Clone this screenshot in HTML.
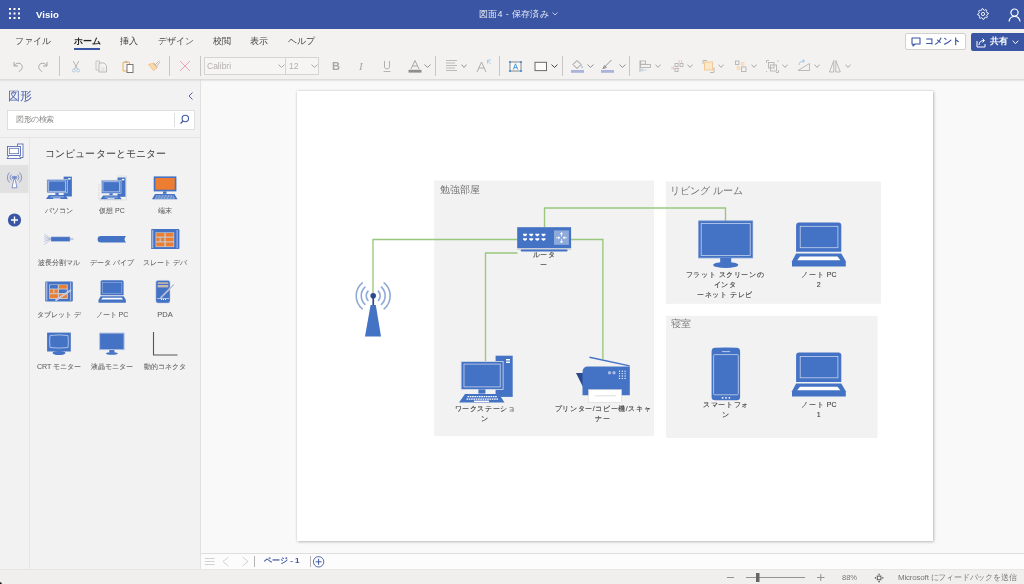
<!DOCTYPE html>
<html><head><meta charset="utf-8">
<style>
*{box-sizing:border-box;margin:0;padding:0}
html,body{-webkit-font-smoothing:antialiased;width:1024px;height:584px;overflow:hidden;background:#f3f2f1;font-family:"Liberation Sans",sans-serif;position:relative}
.a{position:absolute}
.t{position:absolute;white-space:nowrap;line-height:1;will-change:transform}
#top{left:0;top:0;width:1024px;height:29px;background:#3955a3}
#ribbon{left:0;top:29px;width:1024px;height:50px;background:#f3f2f1}
#rshadow{left:0;top:79px;width:1024px;height:3px;background:linear-gradient(#d6d6d6,rgba(240,240,240,0))}
.tab{will-change:transform;position:absolute;top:36px;font-size:9px;color:#444;line-height:10px}
.sep{position:absolute;top:56px;width:1px;height:20px;background:#c8c6c4}
.chev{position:absolute}
#left{left:0;top:79px;width:201px;height:490px;background:#f2f2f2;border-right:1px solid #e1e1e1}
#rail{left:0;top:137px;width:30px;height:432px;border-right:1px solid #e6e6e6;background:#f2f2f2}
#canvas{left:201px;top:79px;width:823px;height:474px;background:#f9f9f9}
#page{left:297px;top:91px;width:636px;height:450px;background:#fff;box-shadow:0 0 2px rgba(0,0,0,.18),1px 1px 3px rgba(0,0,0,.2)}
#pagebar{left:201px;top:553px;width:823px;height:16px;background:#fcfcfc;border-top:1px solid #dedede}
#status{left:0;top:569px;width:1024px;height:15px;background:#f0efee;border-top:1px solid #e6e6e6}
.lbl{will-change:transform;position:absolute;font-size:7px;letter-spacing:0.6px;color:#404040;-webkit-text-stroke:0.12px #404040;line-height:10px;text-align:center;white-space:nowrap}
.sl{font-size:7px;letter-spacing:0;color:#5c5c5c;-webkit-text-stroke:0.05px #5c5c5c}
.sl span{font-size:7px}
.cont{position:absolute;background:#f2f2f2}
.clbl{will-change:transform;position:absolute;font-size:10px;color:#737373;line-height:1;white-space:nowrap}
</style></head><body>
<!-- TOP BAR -->
<div id="top" class="a"></div>
<svg class="a" style="left:9px;top:8px" width="11" height="11" viewBox="0 0 11 11" fill="#fff"><rect x="0" y="0" width="2" height="2"/><rect x="4.5" y="0" width="2" height="2"/><rect x="9" y="0" width="2" height="2"/><rect x="0" y="4.5" width="2" height="2"/><rect x="4.5" y="4.5" width="2" height="2"/><rect x="9" y="4.5" width="2" height="2"/><rect x="0" y="9" width="2" height="2"/><rect x="4.5" y="9" width="2" height="2"/><rect x="9" y="9" width="2" height="2"/></svg>
<div class="t" style="left:35.5px;top:10px;font-size:9.6px;font-weight:bold;color:#fff">Visio</div>
<div class="t" style="left:478.5px;top:10px;font-size:9px;letter-spacing:0.3px;color:#e6e9f4">図面4 - 保存済み</div>
<svg class="a" style="left:552px;top:12px" width="6" height="4" viewBox="0 0 6 4"><path d="M0.5 0.5L3 3L5.5 0.5" stroke="#dfe4f1" stroke-width="0.8" fill="none"/></svg>
<svg class="a" style="left:977px;top:8px" width="12" height="12" viewBox="0 0 12 12"><path d="M11.19 4.95 L11.30 5.98 L9.93 6.77 L9.70 7.52 L10.42 8.93 L9.76 9.73 L8.23 9.32 L7.54 9.69 L7.05 11.19 L6.02 11.30 L5.23 9.93 L4.48 9.70 L3.07 10.42 L2.27 9.76 L2.68 8.23 L2.31 7.54 L0.81 7.05 L0.70 6.02 L2.07 5.23 L2.30 4.48 L1.58 3.07 L2.24 2.27 L3.77 2.68 L4.46 2.31 L4.95 0.81 L5.98 0.70 L6.77 2.07 L7.52 2.30 L8.93 1.58 L9.73 2.24 L9.32 3.77 L9.69 4.46Z" stroke="#fff" stroke-width="0.9" fill="none" stroke-linejoin="round"/><circle cx="6" cy="6" r="1.6" stroke="#fff" stroke-width="0.9" fill="none"/></svg>
<svg class="a" style="left:1008px;top:8px" width="13" height="14" viewBox="0 0 13 14"><circle cx="6.5" cy="4.6" r="3.6" stroke="#fff" stroke-width="1.2" fill="none"/><path d="M1 13.5C1.5 10 3.5 8.5 6.5 8.5S11.5 10 12 13.5" stroke="#fff" stroke-width="1.2" fill="none"/></svg>
<div id="ribbon" class="a"></div>
<div class="tab" style="left:15px">ファイル</div>
<div class="tab" style="left:74px;font-weight:bold;color:#252423">ホーム</div>
<div class="a" style="left:74px;top:48px;width:26px;height:2px;background:#3955a3"></div>
<div class="tab" style="left:120px">挿入</div>
<div class="tab" style="left:158px">デザイン</div>
<div class="tab" style="left:213px">校閲</div>
<div class="tab" style="left:250px">表示</div>
<div class="tab" style="left:288px">ヘルプ</div>
<div class="a" style="left:905px;top:33px;width:61px;height:17px;background:#fff;border:1px solid #d2d0ce;border-radius:2px"></div>
<svg class="a" style="left:911px;top:37px" width="10" height="10" viewBox="0 0 10 10"><path d="M1 1H9V7H4L2 9V7H1Z" stroke="#3955a3" stroke-width="1.1" fill="none" stroke-linejoin="round"/></svg>
<div class="t" style="left:925px;top:37px;font-size:9px;font-weight:bold;color:#3955a3">コメント</div>
<div class="a" style="left:971px;top:33px;width:56px;height:17.5px;background:#3955a3;border-radius:2px"></div>
<svg class="a" style="left:976px;top:36px" width="11" height="12" viewBox="0 0 11 12"><path d="M1 5V11H9V8" stroke="#fff" stroke-width="1" fill="none"/><path d="M3 9C3 6 5 4.5 8 4.5M6.5 2.5L8.5 4.5L6.5 6.5" stroke="#fff" stroke-width="1" fill="none"/></svg>
<div class="t" style="left:990px;top:37px;font-size:9px;font-weight:bold;color:#fff">共有</div>
<svg class="a" style="left:1012px;top:40px" width="7" height="5" viewBox="0 0 7 5"><path d="M0.7 0.7L3.5 3.7L6.3 0.7" stroke="#fff" stroke-width="1" fill="none"/></svg>
<svg class="a" style="left:12px;top:60px" width="12" height="12" viewBox="0 0 12 12" fill="none"><path d="M2 2V6H6" stroke="#a8a6a4" stroke-width="1"/><path d="M2.2 5.8C3.5 3.5 6 2.6 8.2 3.6C10.6 4.8 11 8 8.8 10L6.8 11.8" stroke="#a8a6a4" stroke-width="1"/></svg>
<svg class="a" style="left:37px;top:60px" width="12" height="12" viewBox="0 0 12 12" fill="none"><path d="M10 2V6H6" stroke="#a8a6a4" stroke-width="1"/><path d="M9.8 5.8C8.5 3.5 6 2.6 3.8 3.6C1.4 4.8 1 8 3.2 10L5.2 11.8" stroke="#a8a6a4" stroke-width="1"/></svg>
<div class="sep" style="left:59px"></div>
<svg class="a" style="left:71px;top:60px" width="10" height="13" viewBox="0 0 10 13" fill="none"><path d="M2.2 1L6.5 9M7.8 1L3.5 9" stroke="#a8a6a4" stroke-width="0.8"/><circle cx="2.8" cy="10.5" r="1.5" stroke="#a5c8e4" stroke-width="0.9"/><circle cx="7.2" cy="10.5" r="1.5" stroke="#a5c8e4" stroke-width="0.9"/></svg>
<svg class="a" style="left:95px;top:60px" width="13" height="13" viewBox="0 0 13 13" fill="none"><path d="M1 1H4.5V10H1Z" stroke="#c2c0be" stroke-width="0.9"/><path d="M4 3H9L11.5 5.5V12H4Z" stroke="#b5b3b1" stroke-width="0.9" fill="#f3f2f1"/><path d="M6 8H9.5M6 10H9.5" stroke="#cfcdcb" stroke-width="0.7"/></svg>
<svg class="a" style="left:122px;top:60px" width="13" height="13" viewBox="0 0 13 13" fill="none"><path d="M1 2.2H7.5V11H1Z" stroke="#f0a54a" stroke-width="0.9"/><path d="M3 2.5C3 1 5.5 1 5.5 2.5" stroke="#a19f9d" stroke-width="0.9"/><rect x="5" y="4.5" width="6" height="8" stroke="#797775" stroke-width="1" fill="#fff"/></svg>
<svg class="a" style="left:147px;top:59px" width="14" height="13" viewBox="0 0 14 13" fill="none"><path d="M1.5 5.5L7 4L10.5 8.5L6.5 11.5Z" fill="#fbd9ad" stroke="#f4b86e" stroke-width="0.7"/><path d="M6 4.5L10 8M8 6L12.5 1.5M9.5 7.5L13 3" stroke="#b9b7b5" stroke-width="0.9"/></svg>
<div class="sep" style="left:169px"></div>
<svg class="a" style="left:179px;top:60px" width="12" height="12" viewBox="0 0 12 12" fill="none"><path d="M1 1L11 11M11 1L1 11" stroke="#ec9aa4" stroke-width="0.9"/></svg>
<div class="sep" style="left:200px"></div>
<div class="a" style="left:204px;top:57px;width:82px;height:18px;border:1px solid #d6d4d2;background:#f6f5f4"></div>
<div class="a" style="left:285px;top:57px;width:34px;height:18px;border:1px solid #d6d4d2;background:#f6f5f4"></div>
<div class="t" style="left:207px;top:62px;font-size:8.5px;color:#b3b0ad">Calibri</div>
<div class="t" style="left:289px;top:62px;font-size:8.5px;color:#b3b0ad">12</div>
<svg class="a" style="left:278px;top:64px" width="7" height="4" viewBox="0 0 7 4" fill="none"><path d="M0.5 0.6L3.5 3.4L6.5 0.6" stroke="#a19f9d" stroke-width="0.9"/></svg>
<svg class="a" style="left:311px;top:64px" width="7" height="4" viewBox="0 0 7 4" fill="none"><path d="M0.5 0.6L3.5 3.4L6.5 0.6" stroke="#a19f9d" stroke-width="0.9"/></svg>
<div class="t" style="left:332px;top:61px;font-size:11px;font-weight:bold;color:#a8a6a4">B</div>
<div class="t" style="left:359px;top:61px;font-size:11px;font-style:italic;color:#a8a6a4;font-family:'Liberation Serif',serif">I</div>
<svg class="a" style="left:383px;top:60px" width="8" height="13" viewBox="0 0 8 13" fill="none"><path d="M1.5 1V7C1.5 9.5 6.5 9.5 6.5 7V1" stroke="#a8a6a4" stroke-width="0.9"/><path d="M0.5 11.5H7.5" stroke="#a8a6a4" stroke-width="0.8"/></svg>
<svg class="a" style="left:408px;top:59px" width="14" height="14" viewBox="0 0 14 14" fill="none"><path d="M3 10L7 1.5L11 10M4.5 7H9.5" stroke="#a19f9d" stroke-width="0.9"/><rect x="0.5" y="10.8" width="13" height="2.8" fill="#8f8e8d"/></svg>
<svg class="a" style="left:424px;top:64px" width="7" height="4" viewBox="0 0 7 4" fill="none"><path d="M0.5 0.6L3.5 3.4L6.5 0.6" stroke="#8a8886" stroke-width="0.9"/></svg>
<div class="sep" style="left:435px"></div>
<svg class="a" style="left:445px;top:60px" width="13" height="11" viewBox="0 0 13 11" fill="none"><path d="M1 0.5H12M1 3H10M1 5.5H12M1 8H10M1 10.5H12" stroke="#b5b3b1" stroke-width="0.9"/></svg>
<svg class="a" style="left:461px;top:64px" width="6" height="4" viewBox="0 0 6 4" fill="none"><path d="M0.5 0.6L3.0 3.4L5.5 0.6" stroke="#8a8886" stroke-width="0.9"/></svg>
<svg class="a" style="left:476px;top:59px" width="16" height="14" viewBox="0 0 16 14" fill="none"><path d="M1 13L5.5 3L10 13M2.8 9H8.2" stroke="#a8a6a4" stroke-width="0.9"/><path d="M11.5 1H15M11.5 1V4.5M11.5 1L14.5 5" stroke="#a3cbe9" stroke-width="0.9"/></svg>
<div class="sep" style="left:499px"></div>
<svg class="a" style="left:508px;top:59px" width="15" height="14" viewBox="0 0 15 14" fill="none"><rect x="2" y="3" width="11" height="9" fill="#fafafa" stroke="#7a7a7a" stroke-width="0.9"/><path d="M5.2 10.5L7.5 4.8L9.8 10.5M6 8.7H9" stroke="#3c8fd6" stroke-width="0.9"/><circle cx="2" cy="3" r="1.1" fill="#3c8fd6"/><circle cx="13" cy="3" r="1.1" fill="#3c8fd6"/><circle cx="2" cy="12" r="1.1" fill="#3c8fd6"/><circle cx="13" cy="12" r="1.1" fill="#3c8fd6"/></svg>
<svg class="a" style="left:534px;top:60px" width="14" height="12" viewBox="0 0 14 12" fill="none"><rect x="1" y="2.3" width="11.5" height="8.3" fill="#fbfbfb" stroke="#6a6a6a" stroke-width="1"/></svg>
<svg class="a" style="left:551px;top:64px" width="7" height="4" viewBox="0 0 7 4" fill="none"><path d="M0.5 0.6L3.5 3.4L6.5 0.6" stroke="#323130" stroke-width="0.9"/></svg>
<div class="sep" style="left:562px"></div>
<svg class="a" style="left:570px;top:58px" width="15" height="15" viewBox="0 0 15 15" fill="none"><path d="M3 6.5L7 2.5L11 6.5L7 10.5Z" stroke="#8a8886" stroke-width="0.9"/><path d="M11.5 7.5C12.5 9 12.5 10 11.5 10" stroke="#6fa8dc" stroke-width="0.9"/><rect x="1" y="12" width="13" height="2.8" fill="#aab3dc"/></svg>
<svg class="a" style="left:587px;top:64px" width="7" height="4" viewBox="0 0 7 4" fill="none"><path d="M0.5 0.6L3.5 3.4L6.5 0.6" stroke="#8a8886" stroke-width="0.9"/></svg>
<svg class="a" style="left:600px;top:58px" width="15" height="15" viewBox="0 0 15 15" fill="none"><path d="M3 10.5L11.5 2M3 10.5L4.5 7.5L6.5 9.5Z" stroke="#8a8886" stroke-width="0.9"/><rect x="1" y="12" width="13" height="2.8" fill="#aab3dc"/></svg>
<svg class="a" style="left:619px;top:64px" width="7" height="4" viewBox="0 0 7 4" fill="none"><path d="M0.5 0.6L3.5 3.4L6.5 0.6" stroke="#8a8886" stroke-width="0.9"/></svg>
<div class="sep" style="left:629px"></div>
<svg class="a" style="left:638px;top:59px" width="14" height="14" viewBox="0 0 14 14" fill="none"><path d="M2 1.5V13" stroke="#b5b3b1" stroke-width="1"/><rect x="2.5" y="2" width="5" height="3.2" stroke="#b5b3b1" stroke-width="0.9"/><rect x="2.5" y="5.5" width="10" height="3" stroke="#b5b3b1" stroke-width="0.9"/><path d="M3 11H8.5M3 11L4.8 9.6M3 11L4.8 12.4" stroke="#a9cdea" stroke-width="0.8"/></svg>
<svg class="a" style="left:655px;top:64px" width="6" height="4" viewBox="0 0 6 4" fill="none"><path d="M0.5 0.6L3.0 3.4L5.5 0.6" stroke="#a19f9d" stroke-width="0.9"/></svg>
<svg class="a" style="left:670px;top:59px" width="15" height="14" viewBox="0 0 15 14" fill="none"><rect x="5" y="4.5" width="3" height="3" stroke="#b5b3b1" stroke-width="0.9"/><rect x="10" y="4.5" width="3" height="3" stroke="#b5b3b1" stroke-width="0.9"/><rect x="5" y="9.5" width="3" height="3" stroke="#b5b3b1" stroke-width="0.9"/><path d="M9 1V4M11.5 1V4M2 7.5V10.5M3.5 7.5V10.5" stroke="#f2a9b2" stroke-width="0.7"/><path d="M8.2 8.5L9.5 10" stroke="#f2a9b2" stroke-width="0.6"/></svg>
<svg class="a" style="left:687px;top:64px" width="6" height="4" viewBox="0 0 6 4" fill="none"><path d="M0.5 0.6L3.0 3.4L5.5 0.6" stroke="#a19f9d" stroke-width="0.9"/></svg>
<svg class="a" style="left:701px;top:59px" width="15" height="15" viewBox="0 0 15 15" fill="none"><path d="M2 5V1.5H6" stroke="#b5b3b1" stroke-width="0.9"/><rect x="3.5" y="3" width="8" height="8" fill="#fae8cc" stroke="#f2c994" stroke-width="1"/><path d="M9 13.5H13V8.5" stroke="#b5b3b1" stroke-width="0.9"/></svg>
<svg class="a" style="left:718px;top:64px" width="6" height="4" viewBox="0 0 6 4" fill="none"><path d="M0.5 0.6L3.0 3.4L5.5 0.6" stroke="#a19f9d" stroke-width="0.9"/></svg>
<svg class="a" style="left:734px;top:60px" width="14" height="14" viewBox="0 0 14 14" fill="none"><rect x="1.5" y="1" width="3.5" height="3.5" stroke="#b5b3b1" stroke-width="0.9"/><rect x="7.5" y="7" width="4.5" height="4.5" stroke="#b5b3b1" stroke-width="0.9"/><rect x="7" y="2" width="3.5" height="4" fill="#f9dfc0"/><rect x="2.5" y="6" width="3.5" height="4" fill="#f9dfc0"/></svg>
<svg class="a" style="left:751px;top:64px" width="6" height="4" viewBox="0 0 6 4" fill="none"><path d="M0.5 0.6L3.0 3.4L5.5 0.6" stroke="#a19f9d" stroke-width="0.9"/></svg>
<svg class="a" style="left:765px;top:59px" width="15" height="15" viewBox="0 0 15 15" fill="none"><path d="M1.5 4V1.5H4M13 1.5V3M1.5 12V13M11 13.5H13.5V11" stroke="#b5b3b1" stroke-width="0.9"/><rect x="3.5" y="3.5" width="5.5" height="5.5" stroke="#b5b3b1" stroke-width="0.9"/><rect x="5.5" y="6" width="6" height="6" stroke="#b5b3b1" stroke-width="0.9"/></svg>
<svg class="a" style="left:782px;top:64px" width="6" height="4" viewBox="0 0 6 4" fill="none"><path d="M0.5 0.6L3.0 3.4L5.5 0.6" stroke="#a19f9d" stroke-width="0.9"/></svg>
<svg class="a" style="left:796px;top:58px" width="15" height="15" viewBox="0 0 15 15" fill="none"><path d="M2 12.5L13.5 5.5V12.5Z" stroke="#b5b3b1" stroke-width="0.9"/><path d="M3 7C3 4.5 5 3 8 3M6.8 1.2L8.6 3L6.8 4.8" stroke="#8fc0e6" stroke-width="0.9"/></svg>
<svg class="a" style="left:814px;top:64px" width="6" height="4" viewBox="0 0 6 4" fill="none"><path d="M0.5 0.6L3.0 3.4L5.5 0.6" stroke="#a19f9d" stroke-width="0.9"/></svg>
<svg class="a" style="left:828px;top:59px" width="14" height="14" viewBox="0 0 14 14" fill="none"><path d="M5.8 1.5V13H1.5Z" stroke="#b5b3b1" stroke-width="0.9"/><path d="M7.8 1.5V13H12.3Z" stroke="#b5b3b1" stroke-width="0.9"/></svg>
<svg class="a" style="left:845px;top:64px" width="6" height="4" viewBox="0 0 6 4" fill="none"><path d="M0.5 0.6L3.0 3.4L5.5 0.6" stroke="#a19f9d" stroke-width="0.9"/></svg>
<div id="left" class="a"></div>
<div id="rail" class="a"></div>
<div class="t" style="left:8px;top:90px;font-size:12px;color:#4a62ad">図形</div>
<div class="a" style="left:7px;top:110px;width:188px;height:20px;background:#fff;border:1px solid #e1dfdd"></div>
<div class="a" style="left:174px;top:113px;width:1px;height:14px;background:#e1dfdd"></div>
<div class="t" style="left:16px;top:116px;font-size:8px;letter-spacing:-0.4px;color:#8a8886">図形の検索</div>
<div class="a" style="left:0;top:137px;width:200px;height:1px;background:#e4e4e4"></div>
<div class="t" style="left:45px;top:148.5px;font-size:10px;letter-spacing:0.12px;color:#3b3a39">コンピューターとモニター</div>
<div class="lbl sl" style="left:29px;width:60px;top:205.5px">パソコン</div>
<div class="lbl sl" style="left:82px;width:60px;top:205.5px">仮想 <span>PC</span></div>
<div class="lbl sl" style="left:135px;width:60px;top:205.5px">端末</div>
<div class="lbl sl" style="left:29px;width:60px;top:258px">波長分割マル</div>
<div class="lbl sl" style="left:82px;width:60px;top:258px">データ パイプ</div>
<div class="lbl sl" style="left:135px;width:60px;top:258px">スレート デバ</div>
<div class="lbl sl" style="left:29px;width:60px;top:310px">タブレット デ</div>
<div class="lbl sl" style="left:82px;width:60px;top:310px">ノート <span>PC</span></div>
<div class="lbl sl" style="left:135px;width:60px;top:310px"><span style="font-size:7.5px">PDA</span></div>
<div class="lbl sl" style="left:29px;width:60px;top:361.5px"><span>CRT</span> モニター</div>
<div class="lbl sl" style="left:82px;width:60px;top:361.5px">液晶モニター</div>
<div class="lbl sl" style="left:135px;width:60px;top:361.5px">動的コネクタ</div>
<!--SIDEBAR-SVG-->
<svg class="a" style="left:0;top:0" width="1024" height="584" viewBox="0 0 1024 584"><defs>
<symbol id="pc" viewBox="0 0 54 47" overflow="visible">
<rect x="36.6" y="0" width="17.1" height="41.2" fill="#4472c4"/>
<rect x="47" y="3.3" width="4" height="1.5" fill="#fff"/><rect x="47" y="5.8" width="4" height="1.5" fill="#fff"/>
<rect x="2.1" y="5.8" width="42" height="27.9" fill="#4472c4" stroke="#d6dcea" stroke-width="0.8"/>
<rect x="5" y="8.4" width="36.2" height="22.8" fill="none" stroke="#c5d3ee" stroke-width="0.8"/>
<rect x="19.4" y="33.7" width="7" height="4.2" fill="#4472c4"/>
<path d="M6 38.2H40L45.5 46.7H0Z" fill="#4472c4"/>
<path d="M8.5 41H38M7.5 43.5H39" stroke="#fff" stroke-width="1.3" stroke-dasharray="1.6 0.7"/>
<rect x="15" y="44.9" width="15" height="1.4" fill="#fff"/>
</symbol>
<symbol id="pcs" viewBox="0 0 54 47" overflow="visible">
<rect x="36.6" y="0" width="17.1" height="41.2" fill="#4472c4"/>
<rect x="46" y="3" width="5" height="3" fill="#fff"/>
<rect x="2.1" y="5.8" width="42" height="27.9" fill="#4472c4" stroke="#d6dcea" stroke-width="1.4"/>
<rect x="5.5" y="9" width="35.2" height="21.6" fill="none" stroke="#b7c7ea" stroke-width="1.8"/>
<rect x="19.4" y="33.7" width="7" height="4.2" fill="#4472c4"/>
<path d="M6 38.2H40L45.5 46.7H0Z" fill="#4472c4"/>
<path d="M9 42H37" stroke="#b7c7ea" stroke-width="1.6"/>
<rect x="15" y="44" width="15" height="2" fill="#dfe6f5"/>
</symbol>
<symbol id="tvs" viewBox="0 0 54 47" overflow="visible">
<rect x="0" y="0" width="54" height="37" fill="#a9bce5"/><rect x="2.2" y="2.2" width="49.6" height="32.6" fill="#4472c4"/>
<rect x="21.5" y="37" width="11" height="5" fill="#4472c4"/>
<ellipse cx="27" cy="44" rx="12.5" ry="3" fill="#4472c4"/>
</symbol>
<symbol id="laptop" viewBox="0 0 54 44" overflow="visible">
<path d="M4.1 29.4V3Q4.1 0 7.1 0H46.3Q49.3 0 49.3 3V29.4Z" fill="#4472c4"/>
<rect x="8.2" y="3.9" width="37.7" height="21.4" fill="none" stroke="#c5d3ee" stroke-width="0.8"/>
<path d="M4.1 31.1H49.3L53.8 38.8V44H0V38.8Z" fill="#4472c4"/>
<path d="M8 34.2H45.5L48.3 37.8H5.2Z" fill="#fff"/>
</symbol>
<symbol id="tv" viewBox="0 0 54 47" overflow="visible">
<rect x="0" y="0" width="54" height="37" fill="#4472c4" stroke="#7393d3" stroke-width="0.8"/>
<rect x="2.5" y="2.5" width="49" height="32" fill="none" stroke="#c5d3ee" stroke-width="0.8"/>
<rect x="21.5" y="37" width="11" height="5" fill="#4472c4"/>
<ellipse cx="27" cy="44" rx="12.5" ry="3" fill="#4472c4"/>
</symbol>
</defs>
<!-- rail icons -->
<rect x="0" y="165" width="28.5" height="28" fill="#e1e1e1"/>
<g stroke="#5b6fb5" stroke-width="0.9" fill="#fff">
<rect x="17.5" y="144" width="5.5" height="13.5"/>
<rect x="7.5" y="146.5" width="13" height="9"/>
<path d="M9 155.5H19L21 158.5H7Z"/>
</g>
<rect x="9.3" y="148.3" width="9.4" height="5.4" fill="none" stroke="#5b6fb5" stroke-width="0.8"/>
<g stroke="#6b7fbf" stroke-width="0.8" fill="none">
<path d="M9.5 172.5A7 7 0 0 0 9.5 182.5M19.5 172.5A7 7 0 0 1 19.5 182.5"/>
<path d="M11.3 174.5A4.5 4.5 0 0 0 11.3 180.5M17.7 174.5A4.5 4.5 0 0 1 17.7 180.5"/>
<path d="M12.8 176A2.3 2.3 0 0 0 12.8 179M16.2 176A2.3 2.3 0 0 1 16.2 179"/>
<circle cx="14.5" cy="177.5" r="1.2" fill="#6b7fbf"/>
<path d="M13.8 179.5L12 187.8H17L15.2 179.5Z" fill="#fff"/>
</g>
<circle cx="14.5" cy="220" r="6.6" fill="#3955a3"/>
<path d="M14.5 216.5V223.5M11 220H18" stroke="#fff" stroke-width="1.4"/>
<!-- search icon & chevron -->
<path d="M192.5 92.5L189 96L192.5 99.5" stroke="#4a62ad" stroke-width="1" fill="none"/>
<circle cx="185.3" cy="118.5" r="3.2" stroke="#3f58a8" stroke-width="1.1" fill="none"/>
<path d="M183 121L180.5 123.5" stroke="#3f58a8" stroke-width="1.3"/>
<!-- row1 -->
<use href="#pcs" x="46" y="176.6" width="26" height="22.7"/>
<path d="M99 184V200H126.5V176H117" fill="none" stroke="#b0b0b0" stroke-width="0.6" stroke-dasharray="0.7 0.9"/>
<use href="#pcs" x="100" y="177.5" width="26" height="22"/>
<g>
<rect x="153.7" y="176.4" width="22.7" height="15" fill="#4472c4"/>
<rect x="155.4" y="178" width="19.4" height="11.7" fill="#ed7d31"/>
<rect x="163" y="191.4" width="3.5" height="2.4" fill="#4472c4"/>
<path d="M155 194H174.5L177.5 199.3H152Z" fill="#4472c4"/>
<path d="M156 196H173.5M155 198H175" stroke="#fff" stroke-width="0.8" stroke-dasharray="1 0.5"/>
</g>
<!-- row2 -->
<g stroke="#a8b4d4" stroke-width="0.7" fill="none">
<path d="M51 239L44.5 234M51 239L44 236.5M51 239H44M51 239L44 241.5M51 239L44.5 244.5"/>
</g>
<rect x="51" y="236.9" width="19" height="4.4" fill="#4472c4" stroke="#a8b4d4" stroke-width="0.5"/>
<path d="M70 239H73.5" stroke="#7a93cc" stroke-width="0.8"/>
<path d="M101 236H126L125 237.5Q124 239.3 125 241L126 242.6H101Q97.6 242.6 97.6 239.3Q97.6 236 101 236Z" fill="#4472c4"/>
<g>
<rect x="151" y="229.1" width="28.4" height="20" rx="1.2" fill="#4472c4"/>
<rect x="151.5" y="230" width="1.8" height="18.2" fill="#9fb4e2"/>
<rect x="176.5" y="230" width="1.2" height="18.2" fill="#9fb4e2"/>
<rect x="155.5" y="232.3" width="18.7" height="14.8" fill="#c8c4c4"/>
<g fill="#ed7d31"><rect x="156.3" y="233" width="8" height="3.6" rx="0.6"/><rect x="165.8" y="233" width="7.6" height="3.6" rx="0.6"/>
<rect x="156.3" y="237.7" width="3.3" height="3.6" rx="0.6"/><rect x="160.8" y="237.7" width="3.5" height="3.6" rx="0.6"/><rect x="165.8" y="237.7" width="7.6" height="3.6" rx="0.6"/>
<rect x="156.3" y="242.6" width="8" height="3.6" rx="0.6"/><rect x="165.8" y="242.6" width="7.6" height="3.6" rx="0.6"/></g>
</g>
<!-- row3 -->
<g>
<rect x="45.1" y="281.4" width="27.7" height="20" rx="1.2" fill="#4472c4"/>
<rect x="45.6" y="282.2" width="1.8" height="18.4" fill="#9fb4e2"/>
<rect x="70" y="282.2" width="1.2" height="18.4" fill="#9fb4e2"/>
<rect x="49.2" y="284.4" width="18.6" height="14.6" fill="#c8c4c4"/>
<g><rect x="50" y="285" width="7.8" height="3.6" rx="0.6" fill="#4472c4"/><rect x="59" y="285" width="7.8" height="3.6" rx="0.6" fill="#ed7d31"/>
<rect x="50" y="289.5" width="3.2" height="3.6" rx="0.6" fill="#ed7d31"/><rect x="54.5" y="289.5" width="3.3" height="3.6" rx="0.6" fill="#ed7d31"/><rect x="59" y="289.5" width="7.8" height="3.6" rx="0.6" fill="#4472c4"/>
<rect x="50" y="294.3" width="7.8" height="3.6" rx="0.6" fill="#ed7d31"/><rect x="59" y="294.3" width="7.8" height="3.6" rx="0.6" fill="#ed7d31"/></g>
<path d="M55.5 300.5L71 290" stroke="#dfe3ef" stroke-width="1.6"/><path d="M55.5 300.5L71 290" stroke="#8a94b0" stroke-width="0.5"/>
</g>
<use href="#laptop" x="98.5" y="280" width="27.5" height="23"/>
<g>
<rect x="155.9" y="280.4" width="14.1" height="22.6" rx="2" fill="#4472c4" stroke="#b9c7e8" stroke-width="0.5"/>
<rect x="157.6" y="282.3" width="10.7" height="1.6" fill="#c9b8ad"/>
<rect x="157.6" y="285" width="10.7" height="2.4" fill="#c9b8ad"/>
<path d="M157.2 298.5H169" stroke="#dbe3f3" stroke-width="0.7"/>
<path d="M161 299.5H162M163 299.5H164M165 299.5H166" stroke="#fff" stroke-width="1"/>
<path d="M160.5 298L173.8 284.6" stroke="#e6e9f2" stroke-width="1.5"/><path d="M160.5 298L173.8 284.6" stroke="#5b6a90" stroke-width="0.6"/>
</g>
<!-- row4 -->
<g>
<rect x="47.1" y="332.6" width="23.7" height="18.9" fill="#4472c4"/>
<path d="M50 335.5Q59 334.3 68 335.5Q68.7 341.5 68 347.5Q59 348.7 50 347.5Q49.3 341.5 50 335.5Z" fill="none" stroke="#c5d3ee" stroke-width="0.8"/>
<ellipse cx="59" cy="353" rx="6.5" ry="2" fill="#4472c4"/>
</g>
<use href="#tvs" x="99.1" y="332.6" width="25.5" height="22.2"/>
<path d="M153.5 332V355H177.5" stroke="#555" stroke-width="1.1" fill="none"/>
</svg>
<div id="canvas" class="a"></div>
<div id="page" class="a"></div>
<svg class="a" style="left:0;top:0" width="1024" height="584" viewBox="0 0 1024 584">
<rect x="434.2" y="180.5" width="219.8" height="255.7" fill="#f2f2f2"/>
<rect x="665.8" y="181.5" width="215.2" height="122.3" fill="#f2f2f2"/>
<rect x="666" y="315.8" width="211.5" height="122.2" fill="#f2f2f2"/>
<g stroke="#98c77c" stroke-width="1.35" fill="none">
<path d="M373 296V239.5H517.5"/>
<path d="M544.5 227V208H725.5V221"/>
<path d="M571 239.5H602.9V359"/>
<path d="M517.5 253H485.5V361.5"/>
</g>
<!-- antenna -->
<g stroke="#8eaad8" stroke-width="1.6" fill="none" stroke-linecap="round">
<path d="M362.27 282.78A17 17 0 0 0 362.27 308.82"/>
<path d="M384.13 282.78A17 17 0 0 1 384.13 308.82"/>
<path d="M364.92 287.16A12 12 0 0 0 364.92 304.44"/>
<path d="M381.48 287.16A12 12 0 0 1 381.48 304.44"/>
<path d="M368.02 291.11A7 7 0 0 0 368.02 300.49"/>
<path d="M378.38 291.11A7 7 0 0 1 378.38 300.49"/>
</g>
<rect x="372.4" y="296" width="1.7" height="10" fill="#2b4a8e"/>
<circle cx="373.2" cy="295.8" r="2.8" fill="#2b4a8e"/>
<path d="M370.6 305.1H375.8L381 336.5H365Z" fill="#4472c4"/>
<!-- router -->
<rect x="517.2" y="227.2" width="53.9" height="20.8" fill="#4472c4"/>
<rect x="517.2" y="248" width="53.9" height="1.8" fill="#c9ced8"/>
<rect x="520.7" y="249.6" width="46.9" height="2" rx="1" fill="#4472c4"/>
<rect x="554" y="230.4" width="14.9" height="14.4" fill="#8eaadc"/>
<g fill="#fff">
<path d="M523 233.7H527V235L525 236.5L523 235Z"/><path d="M523 238.29999999999998H527V239.6L525 241.1L523 239.6Z"/><path d="M529.2 233.7H533.2V235L531.2 236.5L529.2 235Z"/><path d="M529.2 238.29999999999998H533.2V239.6L531.2 241.1L529.2 239.6Z"/><path d="M535.3 233.7H539.3V235L537.3 236.5L535.3 235Z"/><path d="M535.3 238.29999999999998H539.3V239.6L537.3 241.1L535.3 239.6Z"/><path d="M541.5 233.7H545.5V235L543.5 236.5L541.5 235Z"/><path d="M541.5 238.29999999999998H545.5V239.6L543.5 241.1L541.5 239.6Z"/>
</g>
<g stroke="#fff" stroke-width="0.7" fill="#fff">
<path d="M561.5 233V236.5M561.5 239V242.5M556 237.7H559.5M563.5 237.7H567"/>
<path d="M560.5 234L561.5 232.5L562.5 234Z M560.5 241.5L561.5 243L562.5 241.5Z M558.5 236.8L560 237.7L558.5 238.6Z M564.5 236.8L563 237.7L564.5 238.6Z"/>
</g>
<!-- workstation -->
<use href="#pc" x="459" y="355.7" width="54" height="47"/>
<!-- printer -->
<path d="M589.5 357.2L629.6 365.9" stroke="#4472c4" stroke-width="1.4"/>
<path d="M576 373.1H583V387Z" fill="#2b4a8e"/>
<path d="M582.5 395.2V372Q582.5 366.4 588 366.4H629.8V395.2Z" fill="#4472c4"/>
<circle cx="609.5" cy="372.8" r="1.7" fill="#a8bce6"/>
<circle cx="614" cy="372.8" r="1.7" fill="#a8bce6"/>
<g fill="#e8eefa"><circle cx="619.5" cy="371.2" r="0.7"/><circle cx="619.5" cy="373.6" r="0.7"/><circle cx="619.5" cy="376" r="0.7"/><circle cx="619.5" cy="378.4" r="0.7"/><circle cx="622.3" cy="371.2" r="0.7"/><circle cx="622.3" cy="373.6" r="0.7"/><circle cx="622.3" cy="376" r="0.7"/><circle cx="622.3" cy="378.4" r="0.7"/><circle cx="625.1" cy="371.2" r="0.7"/><circle cx="625.1" cy="373.6" r="0.7"/><circle cx="625.1" cy="376" r="0.7"/><circle cx="625.1" cy="378.4" r="0.7"/></g>
<rect x="588.5" y="389.6" width="33.1" height="12.6" fill="#fff" stroke="#d0d0d0" stroke-width="0.5"/>
<path d="M594.8 395.8H616" stroke="#c8c8c8" stroke-width="0.6"/>
<!-- TV, laptops -->
<use href="#tv" x="698.7" y="220.9" width="54" height="47"/>
<use href="#laptop" x="792" y="222.4" width="54" height="44"/>
<use href="#laptop" x="792" y="352.5" width="54" height="44"/>
<!-- phone -->
<path d="M711.6 351.5Q711.6 348 715 347.8Q726 347 736.7 347.8Q740.1 348 740.1 351.5V397Q740.1 400.3 736.7 400.3H715Q711.6 400.3 711.6 397Z" fill="#4472c4"/>
<path d="M722 351.6H730" stroke="#c5d3ee" stroke-width="0.9"/>
<rect x="713.6" y="354.6" width="24.7" height="40.2" rx="1" fill="none" stroke="#c5d3ee" stroke-width="0.8"/>
<circle cx="722.6" cy="397.8" r="0.9" fill="#fff"/><circle cx="726" cy="397.8" r="0.9" fill="#fff"/><circle cx="729.4" cy="397.8" r="0.9" fill="#fff"/>
</svg>
<div class="clbl" style="left:439.5px;top:184.5px">勉強部屋</div>
<div class="clbl" style="left:670px;top:185.5px">リビング ルーム</div>
<div class="clbl" style="left:671px;top:319px">寝室</div>
<div class="lbl" style="left:514px;width:60px;top:250px">ルータ<br>ー</div>
<div class="lbl" style="left:445px;width:80px;top:404.3px">ワークステーショ<br>ン</div>
<div class="lbl" style="left:553px;width:100px;top:404.3px">プリンター/コピー機/スキャ<br>ナー</div>
<div class="lbl" style="left:675px;width:100px;top:269.8px">フラット スクリーンの<br>インタ<br>ーネット テレビ</div>
<div class="lbl" style="left:789px;width:60px;top:269.8px">ノート <span style="letter-spacing:0">PC</span><br>2</div>
<div class="lbl" style="left:696px;width:60px;top:399.5px">スマートフォ<br>ン</div>
<div class="lbl" style="left:789px;width:60px;top:399.5px">ノート <span style="letter-spacing:0">PC</span><br>1</div>
<div id="pagebar" class="a"></div>
<div id="status" class="a"></div>
<svg class="a" style="left:0;top:0" width="1024" height="584" viewBox="0 0 1024 584" fill="none">
<path d="M204.8 558.5H214.7M204.8 561.5H214.7M204.8 564.5H214.7" stroke="#c8c6c4" stroke-width="0.8"/>
<path d="M228.5 557L223 561.5L228.5 566" stroke="#c8c6c4" stroke-width="0.8"/>
<path d="M242.5 557L248 561.5L242.5 566" stroke="#c8c6c4" stroke-width="0.8"/>
<path d="M254.5 556V567M310.5 556V567" stroke="#a19f9d" stroke-width="0.8"/>
<circle cx="318.6" cy="561.8" r="5.2" stroke="#3f58a8" stroke-width="0.9"/>
<path d="M318.6 558.8V564.8M315.6 561.8H321.6" stroke="#3f58a8" stroke-width="1"/>
<path d="M727 577.5H734M746 577.5H805M817 577.5H824.5M820.75 574V581" stroke="#8a8886" stroke-width="0.9"/>
<rect x="756" y="573" width="3.5" height="9" fill="#666"/>
<g stroke="#666" stroke-width="1.1"><rect x="877.3" y="576.1" width="3.6" height="3.6"/><path d="M878.2 574.2H880M878.2 581.6H880M875.4 577H875.4V578.8M882.8 577V578.8"/></g>
</svg>
<div class="t" style="left:264px;top:557px;font-size:8px;font-weight:bold;color:#3955a3">ページ - 1</div>
<div class="t" style="left:842px;top:574px;font-size:7.5px;color:#797775">88%</div>
<div class="t" style="left:897.5px;top:574px;font-size:8px;letter-spacing:-0.2px;color:#797775">Microsoft にフィードバックを送信</div>
<div id="rshadow" class="a"></div>
<div class="a" style="left:-2px;top:581.5px;width:4px;height:5px;border-radius:50%;background:#222"></div>
</body></html>
